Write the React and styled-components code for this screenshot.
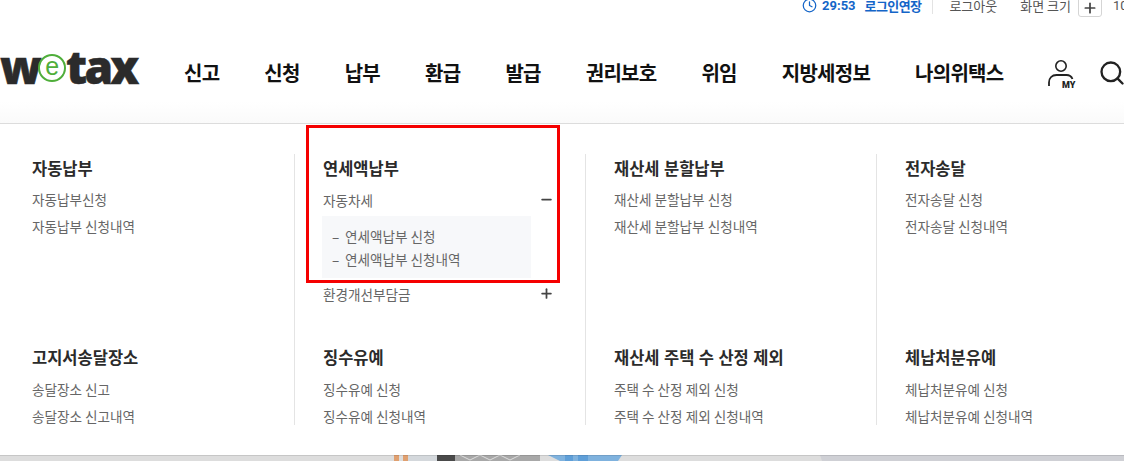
import React from "react";
import styled, { createGlobalStyle } from "styled-components";
import { Clock, Minus, Plus, Search } from "lucide-react";

const GlobalStyle = createGlobalStyle`
  html, body {
    margin: 0;
    padding: 0;
    height: 100%;
    overflow: hidden;
    background: #fff;
  }
  body {
    font-family: "Noto Sans CJK KR", "Noto Sans", sans-serif;
    color: #222;
  }
  * { box-sizing: border-box; }
`;

const navItems = ["신고", "신청", "납부", "환급", "발급", "권리보호", "위임", "지방세정보", "나의위택스"];

const columns = [
  [
    { title: "자동납부", links: ["자동납부신청", "자동납부 신청내역"] },
    { title: "고지서송달장소", links: ["송달장소 신고", "송달장소 신고내역"] },
  ],
  [
    { title: "연세액납부", accordion: true },
    { title: "징수유예", links: ["징수유예 신청", "징수유예 신청내역"] },
  ],
  [
    { title: "재산세 분할납부", links: ["재산세 분할납부 신청", "재산세 분할납부 신청내역"] },
    { title: "재산세 주택 수 산정 제외", links: ["주택 수 산정 제외 신청", "주택 수 산정 제외 신청내역"] },
  ],
  [
    { title: "전자송달", links: ["전자송달 신청", "전자송달 신청내역"] },
    { title: "체납처분유예", links: ["체납처분유예 신청", "체납처분유예 신청내역"] },
  ],
];

const Page = styled.div`
  position: relative;
  width: 1124px;
  height: 461px;
  overflow: hidden;
  display: flex;
  flex-direction: column;
`;

const TopBar = styled.div`
  height: 17px;
  flex: none;
  display: flex;
  justify-content: flex-end;
  align-items: flex-end;
  overflow: hidden;
  font-size: 13px;
  color: #555;
  white-space: nowrap;
`;

const TopText = styled.span`
  display: block;
  line-height: 20px;
  margin-bottom: 1px;
  margin-left: ${(p) => p.$left || 0}px;
  font-weight: ${(p) => (p.$bold ? 700 : 400)};
  color: ${(p) => (p.$blue ? "#1465c8" : "#555")};
  font-family: ${(p) => (p.$latin ? '"Roboto", sans-serif' : "inherit")};
`;

const RenewText = styled(TopText)`
  letter-spacing: -0.6px;
`;

const TimerIcon = styled(Clock)`
  width: 15px;
  height: 15px;
  color: #1465c8;
  margin-bottom: 4px;
`;

const TopDivider = styled.i`
  display: block;
  width: 1px;
  height: 14px;
  background: #e3e3e3;
  margin: 0 16px 3px 11px;
`;

const ZoomButton = styled.span`
  display: flex;
  align-items: center;
  justify-content: center;
  width: 24px;
  height: 24px;
  margin-left: 7px;
  border: 1px solid #d5d5d5;
  border-radius: 3px;
  color: #444;
  padding-top: 6px;
`;

const TopEnd = styled(TopText)`
  width: 11px;
  margin-left: 11px;
  overflow: hidden;
`;

const Header = styled.header`
  height: 107px;
  flex: none;
  display: flex;
  align-items: flex-start;
  padding-top: 26px;
  border-bottom: 1px solid #dcdcdc;
  background: linear-gradient(#fff 80%, #fafafa);
`;

const Logo = styled.div`
  width: 184px;
  flex: none;
  display: flex;
  align-items: center;
  height: 46px;
  font-family: "Open Sans", sans-serif;
  font-weight: 800;
  font-size: 46px;
  line-height: 46px;
  color: #2b2b2b;
  letter-spacing: -2.8px;
  -webkit-text-stroke: 0.5px #2b2b2b;
`;

const LogoE = styled.span`
  display: flex;
  align-items: center;
  justify-content: center;
  width: 28px;
  height: 28px;
  flex: none;
  margin: 3px 0 0 -1px;
  border: 2px solid #4fae3a;
  border-radius: 50%;
  color: #4fae3a;
  font-family: "Liberation Sans", sans-serif;
  font-weight: 400;
  font-size: 25px;
  letter-spacing: 0;
  line-height: 20px;
  padding-bottom: 3px;
  -webkit-text-stroke: 0;
`;

const Nav = styled.nav`
  display: flex;
  gap: 45px;
  height: 30px;
  align-items: center;
  font-size: 20px;
  font-weight: 700;
  letter-spacing: -0.73px;
  color: #111;
  white-space: nowrap;
  margin-top: 14px;
`;

const NavIcons = styled.div`
  display: flex;
  align-items: center;
  gap: 21px;
  margin-left: 44px;
  margin-top: 15px;
  height: 30px;
`;

const SearchIcon = styled(Search)`
  width: 28px;
  height: 28px;
  color: #222;
  flex: none;
`;

const Menu = styled.div`
  flex: 1;
  display: grid;
  grid-template-columns: repeat(4, 291px);
  padding: 30px 0 0 4px;
  background: #fff;
`;

const Column = styled.div`
  height: 271px;
  overflow: hidden;
  padding-left: 28px;
  border-right: ${(p) => (p.$last ? "none" : "1px solid #e4e4e4")};
`;

const LinkList = styled.ul`
  list-style: none;
  margin: 3px 0 0;
  padding: 0;
`;

const Group = styled.section`
  height: 189px;
  & + & ${LinkList} {
    margin-top: 4px;
  }
`;

const GroupTitle = styled.h3`
  margin: 0;
  height: 29px;
  line-height: 29px;
  font-size: 16.5px;
  font-weight: 700;
  word-spacing: 0.7px;
  color: #2b2b2b;
`;

const LinkItem = styled.li`
  height: 27px;
  line-height: 27px;
  font-size: 13.6px;
  color: #666;
`;

const AccordionRow = styled.div`
  width: 228px;
  height: 27px;
  display: flex;
  align-items: center;
  justify-content: space-between;
  font-size: 13.6px;
  color: #666;
  margin-top: ${(p) => p.$top || 0}px;
  svg {
    width: 15px;
    height: 15px;
    color: #444;
    margin-right: -3px;
    stroke-width: 2.8;
  }
`;

const SubPanel = styled.ul`
  list-style: none;
  width: 209px;
  height: 62px;
  margin: 3px 0 0 -1px;
  padding: 9px 0 0 10px;
  background: #f7f8fa;
`;

const SubItem = styled.li`
  height: 22px;
  line-height: 22px;
  font-size: 13.6px;
  color: #666;
  & + & {
    margin-top: 1px;
  }
  &::before {
    content: "–";
    display: inline-block;
    width: 13px;
    color: #555;
  }
`;

const Highlight = styled.div`
  position: absolute;
  left: 306px;
  top: 125px;
  width: 254px;
  height: 158px;
  border: 3px solid #f50000;
  pointer-events: none;
`;

const Strip = styled.svg`
  display: block;
  flex: none;
  width: 1124px;
  height: 6px;
`;

function UserIcon() {
  return (
    <svg width="30" height="31" viewBox="0 0 30 31" fill="none">
      <circle cx="14" cy="8" r="5.2" stroke="#222" strokeWidth="1.6" />
      <path d="M2 28v-3.5c0-4.5 3-7.5 7.5-7.5h10c3 0 5 1.5 6 4" stroke="#222" strokeWidth="1.8" />
      <text x="15" y="30" fontFamily="Roboto, sans-serif" fontWeight="900" fontSize="9" fill="#222">MY</text>
    </svg>
  );
}

function BottomStrip() {
  return (
    <Strip viewBox="0 0 1124 6" preserveAspectRatio="none">
      <rect width="1124" height="6" fill="#dddddd" />
      <rect x="394" width="5" height="6" fill="#e0a070" />
      <rect x="403" width="5" height="6" fill="#e0a070" />
      <rect x="408" width="29" height="6" fill="#d4d8dc" />
      <rect x="437" width="18" height="6" fill="#4a4a4a" />
      <rect x="455" width="85" height="6" fill="#a8a8a8" />
      <path d="M460 0l10 5 10-5 10 5 10-5 10 5 10-5" stroke="#ddd" fill="none" />
      <polygon points="548,0 622,0 618,6 560,6" fill="#7fb2de" />
      <rect x="565" width="8" height="6" fill="#5f9fd8" />
      <rect x="578" width="10" height="6" fill="#5f9fd8" />
      <polygon points="820,0 1124,0 1124,6 822,6" fill="#cfd0d5" />
      <rect width="1124" height="1" fill="#000" opacity="0.1" />
    </Strip>
  );
}

function Accordion() {
  return (
    <>
      <AccordionRow $top={3}>
        자동차세
        <Minus />
      </AccordionRow>
      <SubPanel>
        <SubItem>연세액납부 신청</SubItem>
        <SubItem>연세액납부 신청내역</SubItem>
      </SubPanel>
      <AccordionRow $top={2}>
        환경개선부담금
        <Plus />
      </AccordionRow>
    </>
  );
}

export default function App() {
  return (
    <Page>
      <GlobalStyle />
      <TopBar>
        <TimerIcon />
        <TopText $bold $blue $latin $left={5}>29:53</TopText>
        <RenewText $bold $blue $left={9}>로그인연장</RenewText>
        <TopDivider />
        <TopText>로그아웃</TopText>
        <TopText $left={23}>화면 크기</TopText>
        <ZoomButton>
          <Plus size={16} strokeWidth={2.6} />
        </ZoomButton>
        <TopEnd $latin>100%</TopEnd>
      </TopBar>
      <Header>
        <Logo>
          w<LogoE>e</LogoE>tax
        </Logo>
        <Nav>
          {navItems.map((item) => (
            <span key={item}>{item}</span>
          ))}
        </Nav>
        <NavIcons>
          <UserIcon />
          <SearchIcon strokeWidth={2} />
        </NavIcons>
      </Header>
      <Menu>
        {columns.map((groups, i) => (
          <Column key={i} $last={i === columns.length - 1}>
            {groups.map((group) => (
              <Group key={group.title}>
                <GroupTitle>{group.title}</GroupTitle>
                {group.accordion ? (
                  <Accordion />
                ) : (
                  <LinkList>
                    {group.links.map((link) => (
                      <LinkItem key={link}>{link}</LinkItem>
                    ))}
                  </LinkList>
                )}
              </Group>
            ))}
          </Column>
        ))}
      </Menu>
      <BottomStrip />
      <Highlight />
    </Page>
  );
}
